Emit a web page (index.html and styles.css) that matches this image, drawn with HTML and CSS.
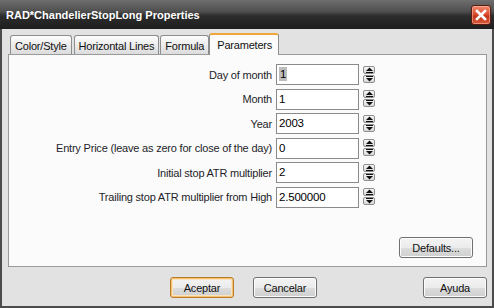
FILE: index.html
```html
<!DOCTYPE html>
<html lang="en">
<head>
    <meta charset="UTF-8">
    <title>RAD*ChandelierStopLong Properties</title>
    <link rel="stylesheet" href="styles.css">
</head>
<body>
    <div class="window">
        <div class="titlebar">
            <span class="title">RAD*ChandelierStopLong Properties</span>
            <div class="close">
                <svg width="12" height="12" viewBox="0 0 12 12">
                    <path d="M2 2 L10 10 M10 2 L2 10" stroke="#fff" stroke-width="2.6" stroke-linecap="square"/>
                </svg>
            </div>
        </div>
        <div class="client">
            <div class="tabs">
                <div class="tab">Color/Style</div>
                <div class="tab">Horizontal Lines</div>
                <div class="tab">Formula</div>
                <div class="tab active">Parameters</div>
            </div>
            <div class="panel">
                <div class="form">
                    <label>Day of month</label>
                    <div class="field"><span class="sel">1</span></div>
                    <div class="spin"></div>

                    <label>Month</label>
                    <div class="field">1</div>
                    <div class="spin"></div>

                    <label>Year</label>
                    <div class="field">2003</div>
                    <div class="spin"></div>

                    <label>Entry Price (leave as zero for close of the day)</label>
                    <div class="field">0</div>
                    <div class="spin"></div>

                    <label>Initial stop ATR multiplier</label>
                    <div class="field">2</div>
                    <div class="spin"></div>

                    <label>Trailing stop ATR multiplier from High</label>
                    <div class="field">2.500000</div>
                    <div class="spin"></div>
                </div>
                <div class="panel-foot">
                    <button class="btn defaults">Defaults...</button>
                </div>
            </div>
            <div class="actions">
                <button class="btn primary">Aceptar</button>
                <button class="btn">Cancelar</button>
                <span class="spacer"></span>
                <button class="btn">Ayuda</button>
            </div>
        </div>
    </div>
    <script>
        // spinner arrows are the same in every row
        const arrows = '<div class="half"><svg width="9" height="6" viewBox="0 0 9 6"><path d="M1 4 L4.5 0.5 L8 4 Z" fill="#111"/><rect x="1" y="5" width="7" height="1" fill="#111"/></svg></div>' +
            '<div class="half"><svg width="9" height="6" viewBox="0 0 9 6"><rect x="1" y="0" width="7" height="1" fill="#111"/><path d="M1 2 L4.5 5.5 L8 2 Z" fill="#111"/></svg></div>';
        document.querySelectorAll('.spin').forEach(s => s.innerHTML = arrows);
    </script>
</body>
</html>
```

FILE: styles.css
```css
body {
    margin: 0;
    font-family: 'Liberation Sans', Arial, sans-serif;
    font-size: 11px;
    letter-spacing: -0.2px;
    color: #1a1a1a;
    background: #e2e2e2;
}

.window {
    width: 494px;
    height: 308px;
    box-sizing: border-box;
    display: flex;
    flex-direction: column;
    background: #e2e2e2;
    border: 2px solid #4c4c4c;
    border-top: none;
}

.titlebar {
    height: 29px;
    margin: 0 -2px;
    display: flex;
    align-items: center;
    justify-content: space-between;
    padding: 0 3px 0 6px;
    background: linear-gradient(#6e6e6e, #4e4e4e 40%, #2c2c2c 55%, #1e1e1e);
}

.title {
    color: #fff;
    font-weight: bold;
    font-size: 11px;
    letter-spacing: 0;
    margin-top: 1px;
}

.close {
    width: 20px;
    height: 20px;
    box-sizing: border-box;
    display: flex;
    align-items: center;
    justify-content: center;
    border: 1px solid #5a1c10;
    border-radius: 3px;
    background: linear-gradient(#f08a6e, #d9482a 50%, #c2351a 55%, #d85a3a);
    box-shadow: inset 0 0 0 1px rgba(255, 200, 180, 0.5);
}

.client {
    flex: 1;
    display: flex;
    flex-direction: column;
    padding: 4px 5px 0 6px;
}

.tabs {
    display: flex;
    align-items: flex-end;
    height: 21px;
    padding-left: 2px;
    gap: 2px;
    position: relative;
    z-index: 1;
}

.tab {
    height: 19px;
    box-sizing: border-box;
    padding: 3px 4px 0;
    line-height: 14px;
    color: #111;
    border: 1px solid #8d8d8d;
    border-bottom: none;
    border-radius: 3px 3px 0 0;
    background: linear-gradient(#fdfdfd, #ececec 50%, #dcdcdc);
}

.tab:nth-child(3) {
    margin-left: -1px;
}

.tab.active {
    height: 22px;
    margin-left: -2px;
    margin-bottom: -1px;
    padding: 3px 6px 0 7px;
    background: #fbfbfb;
    border-top: 2px solid #f0a63a;
}

.panel {
    height: 213px;
    box-sizing: border-box;
    border: 1px solid #9a9a9a;
    background: #fbfbfb;
    display: flex;
    flex-direction: column;
    justify-content: space-between;
}

.form {
    display: grid;
    grid-template-columns: 263px 83px 13px;
    grid-auto-rows: 21px;
    column-gap: 4px;
    row-gap: 3.6px;
    align-items: center;
    padding-top: 9px;
}

.form label {
    text-align: right;
    color: #1e1e2a;
}

.field {
    height: 21px;
    box-sizing: border-box;
    border: 1px solid #8a8a8a;
    background: #fff;
    padding: 3px 2px 0;
    font-size: 11.5px;
    color: #000;
}

.sel {
    background: #bdbdbd;
    padding: 1px;
}

.spin {
    display: flex;
    flex-direction: column;
    gap: 1px;
    height: 18px;
}

.half {
    height: 8px;
    width: 12px;
    box-sizing: border-box;
    border: 1px solid #8e8e8e;
    border-radius: 2px;
    background: linear-gradient(#f7f7f7, #d8d8d8);
    display: flex;
    align-items: center;
    justify-content: center;
}

.panel-foot {
    display: flex;
    justify-content: flex-end;
    padding: 0 13px 8px 0;
}

.btn {
    font-family: inherit;
    font-size: 11px;
    letter-spacing: -0.2px;
    color: #111;
    height: 21px;
    width: 64px;
    box-sizing: border-box;
    padding: 0;
    border: 1px solid #707070;
    border-radius: 3px;
    background: linear-gradient(#f4f4f4, #ebebeb 50%, #dddddd 51%, #cfcfcf);
    box-shadow: inset 0 0 0 1px #fcfcfc;
}

.defaults {
    width: 74px;
}

.primary {
    border-color: #b77d2a;
    box-shadow: inset 0 0 0 1px #f6c070, inset 0 0 0 2px #fbe3bb;
}

.actions {
    display: flex;
    align-items: center;
    gap: 19px;
    padding: 10px 0 0 162px;
}

.spacer {
    flex: 1;
}
```
